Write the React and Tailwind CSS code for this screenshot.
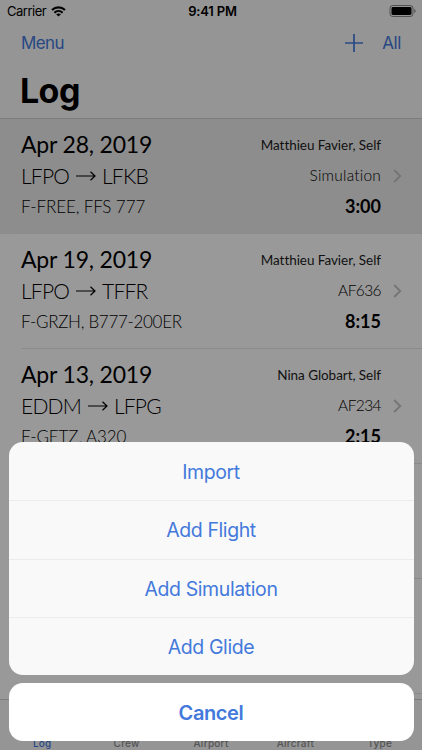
import React from 'react';

const flights = [
  { date: 'Apr 28, 2019', from: 'LFPO', to: 'LFKB', aircraft: 'F-FREE, FFS 777', aircraftClass: 'tracking-[-0.1px]', crew: 'Matthieu Favier, Self', number: 'Simulation', numberClass: 'tracking-[0.2px]', time: '3:00', selected: true },
  { date: 'Apr 19, 2019', from: 'LFPO', to: 'TFFR', aircraft: 'F-GRZH, B777-200ER', aircraftClass: 'tracking-[-0.3px]', crew: 'Matthieu Favier, Self', number: 'AF636', numberClass: 'tracking-[-0.6px]', time: '8:15' },
  { date: 'Apr 13, 2019', from: 'EDDM', to: 'LFPG', aircraft: 'F-GETZ, A320', aircraftClass: 'tracking-[-0.1px]', crew: 'Nina Globart, Self', number: 'AF234', numberClass: 'tracking-[-0.6px]', time: '2:15' },
];

const tabs = ['Log', 'Crew', 'Airport', 'Aircraft', 'Type'];
const actions = ['Import', 'Add Flight', 'Add Simulation', 'Add Glide'];

function StatusBar() {
  return (
    <div className="grid h-[22px] grid-cols-3 items-center pl-[7px] pr-[6px] text-[13px] leading-none text-black">
      <div className="flex items-center gap-[5px]">
        <span className="tracking-[-0.5px]">Carrier</span>
        <svg width="15" height="11" viewBox="0 0 15 11" fill="none" stroke="currentColor" strokeWidth="2.1">
          <path d="M1 4.1C4.7.4 10.3.4 14 4.1" />
          <path d="M3.4 6.7c2.4-2.3 5.8-2.3 8.2 0" />
          <path d="M7.5 10.6 5.1 8.3c1.4-1.2 3.4-1.2 4.8 0z" fill="currentColor" stroke="none" />
        </svg>
      </div>
      <span className="pl-[2px] text-center font-semibold tracking-[-0.2px]">9:41 PM</span>
      <svg className="justify-self-end" width="27" height="12" viewBox="0 0 27 12">
        <rect x="1" y="0.5" width="23" height="11" rx="2.8" fill="none" stroke="#000" strokeOpacity="0.45" />
        <rect x="2.5" y="2" width="20" height="8" rx="1.4" fill="#000" />
        <path d="M25.3 4v4c1.7-.7 1.7-3.3 0-4z" fill="#000" fillOpacity="0.5" />
      </svg>
    </div>
  );
}

function Header() {
  return (
    <header className="h-[119px] border-b border-[#d0d0d0] bg-[#f8f8f8]">
      <StatusBar />
      <div className="flex h-[43px] items-center pl-[21px] pr-[21px] text-[17px] text-[#4479dc]">
        <span className="tracking-[-0.6px]">Menu</span>
        <svg className="mb-[2px] ml-auto mr-[19px]" width="18" height="18" viewBox="0 0 18 18" stroke="currentColor" strokeWidth="1.7">
          <path d="M9 0v18M0 9h18" />
        </svg>
        <span className="tracking-[-0.4px]">All</span>
      </div>
      <h1 className="pl-5 pt-[3px] text-[34px] font-bold leading-[46px] tracking-[-0.6px] text-black">Log</h1>
    </header>
  );
}

function FlightRow({ flight }) {
  return (
    <div className={`h-[115px] pl-[21px] ${flight.selected ? 'bg-[#ebebeb]' : 'bg-white'}`}>
      <div className="flex h-full items-center border-b border-[#e8e8eb] pr-[20px] font-['Lato','Noto_Sans',sans-serif] text-black">
        <div className="flex h-full flex-1 flex-col pt-[10px]">
          <span className="text-[23px] leading-[31px] tracking-[-0.18px]">{flight.date}</span>
          <span className="flex items-center text-[21px] font-light leading-[31px] tracking-[-0.8px]">
            {flight.from}
            <svg className="ml-[7px] mr-[6px]" width="20" height="10" viewBox="0 0 20 10" fill="none" stroke="currentColor" strokeWidth="1.2">
              <path d="M0 5h19M14.5.8 19 5l-4.5 4.2" />
            </svg>
            {flight.to}
          </span>
          <span className={`text-[17px] font-light leading-[32px] ${flight.aircraftClass}`}>{flight.aircraft}</span>
        </div>
        <div className="flex h-full flex-col items-end pt-[11px]">
          <span className="text-[13.5px] leading-[30px] tracking-[-0.05px] text-[#1c1c1c]">{flight.crew}</span>
          <span className={`text-[15.5px] font-light leading-[31px] ${flight.numberClass}`}>{flight.number}</span>
          <span className="text-[18px] font-bold leading-[31px]">{flight.time}</span>
        </div>
        <svg className="mb-[1px] ml-[12px]" width="9" height="14" viewBox="0 0 9 14" fill="none" stroke="#c4c4c8" strokeWidth="1.9">
          <path d="m1.2 1 6 6-6 6" />
        </svg>
      </div>
    </div>
  );
}

function TabBar() {
  return (
    <nav className="flex h-[51px] items-end border-t border-[#d0d0d0] bg-[#f8f8f8] pb-[1px] text-[10px] font-medium leading-[12px] tracking-[0.25px] text-[#8e8e8e]">
      {tabs.map((tab, i) => (
        <span key={tab} className={`flex-1 text-center ${i === 0 ? 'text-[#4479dc]' : ''}`}>{tab}</span>
      ))}
    </nav>
  );
}

function ActionSheet() {
  return (
    <div className="absolute inset-0 flex flex-col justify-end gap-2 bg-black/40 px-[8.5px] pb-[9px] text-center text-[#4479dc]">
      <div className="overflow-hidden rounded-[14px] bg-[#f9f9f9]">
        {actions.map((action, i) => (
          <button key={action} className={`block h-[58.25px] w-full pt-[2px] text-[19.5px] tracking-[-0.4px] ${i > 0 ? 'border-t border-[#ececee]' : ''}`}>
            {action}
          </button>
        ))}
      </div>
      <button className="h-[58px] w-full rounded-[14px] bg-white pt-[2px] text-[20px] font-semibold tracking-[-0.4px]">Cancel</button>
    </div>
  );
}

export default function App() {
  return (
    <div className="relative flex h-[750px] w-[422px] flex-col overflow-hidden bg-white font-['Inter','Liberation_Sans',sans-serif]">
      <Header />
      <main className="min-h-0 flex-1 overflow-hidden">
        {flights.map((flight) => (
          <FlightRow key={flight.date} flight={flight} />
        ))}
        {/* empty rows keep their separators */}
        <div className="ml-[21px] h-[115px] border-b border-[#e8e8eb]" />
        <div className="ml-[21px] h-[115px] border-b border-[#e8e8eb]" />
      </main>
      <TabBar />
      <ActionSheet />
    </div>
  );
}
